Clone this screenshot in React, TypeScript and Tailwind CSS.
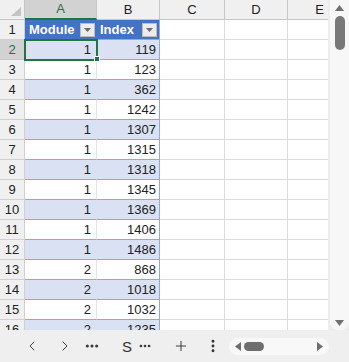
import { ChevronLeft, ChevronRight, Ellipsis, EllipsisVertical, Plus } from 'lucide-react';

const rows: [number, number][] = [
  [1, 119],
  [1, 123],
  [1, 362],
  [1, 1242],
  [1, 1307],
  [1, 1315],
  [1, 1318],
  [1, 1345],
  [1, 1369],
  [1, 1406],
  [1, 1486],
  [2, 868],
  [2, 1018],
  [2, 1032],
  [2, 1235],
];

const cols = ['B', 'C', 'D', 'E'];

function Dropdown() {
  return (
    <div className="w-[15px] h-[14px] bg-[#ececec] border border-[#bdbdbd] flex items-center justify-center">
      <svg width="7" height="4" viewBox="0 0 7 4">
        <path d="M0 0 H7 L3.5 4 Z" fill="#6b6b6b" />
      </svg>
    </div>
  );
}

export default function App() {
  return (
    <div className="w-[349px] h-[362px] flex flex-col bg-white overflow-hidden text-[13px] text-[#222] font-['Liberation_Sans',Arial,sans-serif]">
      <div className="flex h-[330px]">
        <div className="relative w-[328px] overflow-hidden">
          <div className="grid w-max grid-cols-[25px_72px_63px_65px_63px_64px] auto-rows-[20px]">
            {/* column headers */}
            <div className="bg-[#f0f0f0] border-r border-b border-[#c6c6c6] flex items-end justify-end p-[3px]">
              <svg width="10" height="9" viewBox="0 0 10 9">
                <path d="M10 0 V9 H0 Z" fill="#c4c4c4" />
              </svg>
            </div>
            <div className="bg-[#d2d2d2] border-r border-r-[#c6c6c6] border-b-2 border-b-[#217346] text-[#217346] flex items-center justify-center">
              A
            </div>
            {cols.map((c) => (
              <div
                key={c}
                className="bg-[#f0f0f0] border-r border-b border-[#c6c6c6] flex items-center justify-center"
              >
                {c}
              </div>
            ))}

            {/* row 1: table header */}
            <div className="bg-[#f0f0f0] border-r border-b border-[#d0d0d0] flex items-center justify-center">1</div>
            <div className="bg-[#4472c4] border-b border-[#8ea9db] flex items-center justify-between pl-[4px] pr-[2px] text-white font-bold">
              Module
              <Dropdown />
            </div>
            <div className="bg-[#4472c4] border-r border-b border-[#8ea9db] flex items-center justify-between pl-[3px] pr-[2px] text-white font-bold">
              Index
              <Dropdown />
            </div>
            <div className="border-r border-b border-[#dcdcdc]" />
            <div className="border-r border-b border-[#dcdcdc]" />
            <div className="border-r border-b border-[#dcdcdc]" />

            {rows.map(([m, idx], i) => {
              const n = i + 2;
              const banded = n % 2 === 0;
              const selected = n === 2;
              return [
                <div
                  key={`h${n}`}
                  className={
                    selected
                      ? 'bg-[#d2d2d2] text-[#217346] border-r border-b border-[#c6c6c6] flex items-center justify-center'
                      : 'bg-[#f0f0f0] border-r border-b border-[#d0d0d0] flex items-center justify-center'
                  }
                >
                  {n}
                </div>,
                <div
                  key={`a${n}`}
                  className={
                    banded
                      ? 'bg-[#d9e1f2] border-r border-r-[#d9e1f2] border-b border-b-[#8ea9db] flex items-center justify-end pr-[5px]'
                      : 'bg-white border-r border-r-[#e4e4e4] border-b border-b-[#8ea9db] flex items-center justify-end pr-[5px]'
                  }
                >
                  {m}
                </div>,
                <div
                  key={`b${n}`}
                  className={
                    banded
                      ? 'bg-[#d9e1f2] border-r border-b border-[#8ea9db] flex items-center justify-end pr-[3px]'
                      : 'bg-white border-r border-b border-[#8ea9db] flex items-center justify-end pr-[3px]'
                  }
                >
                  {idx}
                </div>,
                <div key={`c${n}`} className="border-r border-b border-[#dcdcdc]" />,
                <div key={`d${n}`} className="border-r border-b border-[#dcdcdc]" />,
                <div key={`e${n}`} className="border-r border-b border-[#dcdcdc]" />,
              ];
            })}
          </div>

          {/* selection of A2 */}
          <div className="absolute left-[24px] top-[39px] w-[74px] h-[22px] border-2 border-[#217346]" />
          <div className="absolute left-[94px] top-[56px] w-[6px] h-[6px] bg-[#217346] border border-white" />
        </div>

        {/* vertical scrollbar */}
        <div className="w-[21px] bg-[#ededed] pl-[2px]">
          <div className="h-full rounded-b-[8px] bg-[#f7f7f7] flex flex-col items-center pt-[5px] pb-[4px]">
            <svg width="9" height="6" viewBox="0 0 9 6">
              <path d="M4.5 0 L9 6 H0 Z" fill="#707070" />
            </svg>
            <div className="mt-[5px] w-[10px] h-[34px] rounded-full bg-[#787878]" />
            <div className="flex-1" />
            <svg width="9" height="6" viewBox="0 0 9 6">
              <path d="M0 0 H9 L4.5 6 Z" fill="#707070" />
            </svg>
          </div>
        </div>
      </div>

      {/* bottom bar */}
      <div className="h-[32px] bg-[#efefef] flex items-center text-[#333]">
        <div className="w-[24px]" />
        <ChevronLeft size={16} strokeWidth={1.4} />
        <div className="w-[17px]" />
        <ChevronRight size={16} strokeWidth={1.4} />
        <div className="w-[11px]" />
        <Ellipsis size={16} strokeWidth={2.6} />
        <div className="w-[22px]" />
        <span className="text-[15px] leading-none">S</span>
        <div className="w-[6px]" />
        <Ellipsis size={14} strokeWidth={2.6} />
        <div className="w-[21px]" />
        <Plus size={16} strokeWidth={1.4} />
        <div className="w-[16px]" />
        <EllipsisVertical size={16} strokeWidth={2.4} />
        <div className="w-[8px]" />
        <div className="w-[100px] h-[17px] rounded-full bg-[#f8f8f8] flex items-center px-[6px]">
          <svg width="6" height="9" viewBox="0 0 6 9">
            <path d="M6 0 V9 L0 4.5 Z" fill="#6e6e6e" />
          </svg>
          <div className="ml-[3px] w-[20px] h-[9px] rounded-full bg-[#6e6e6e]" />
          <div className="flex-1" />
          <svg width="6" height="9" viewBox="0 0 6 9">
            <path d="M0 0 V9 L6 4.5 Z" fill="#6e6e6e" />
          </svg>
        </div>
      </div>
    </div>
  );
}
